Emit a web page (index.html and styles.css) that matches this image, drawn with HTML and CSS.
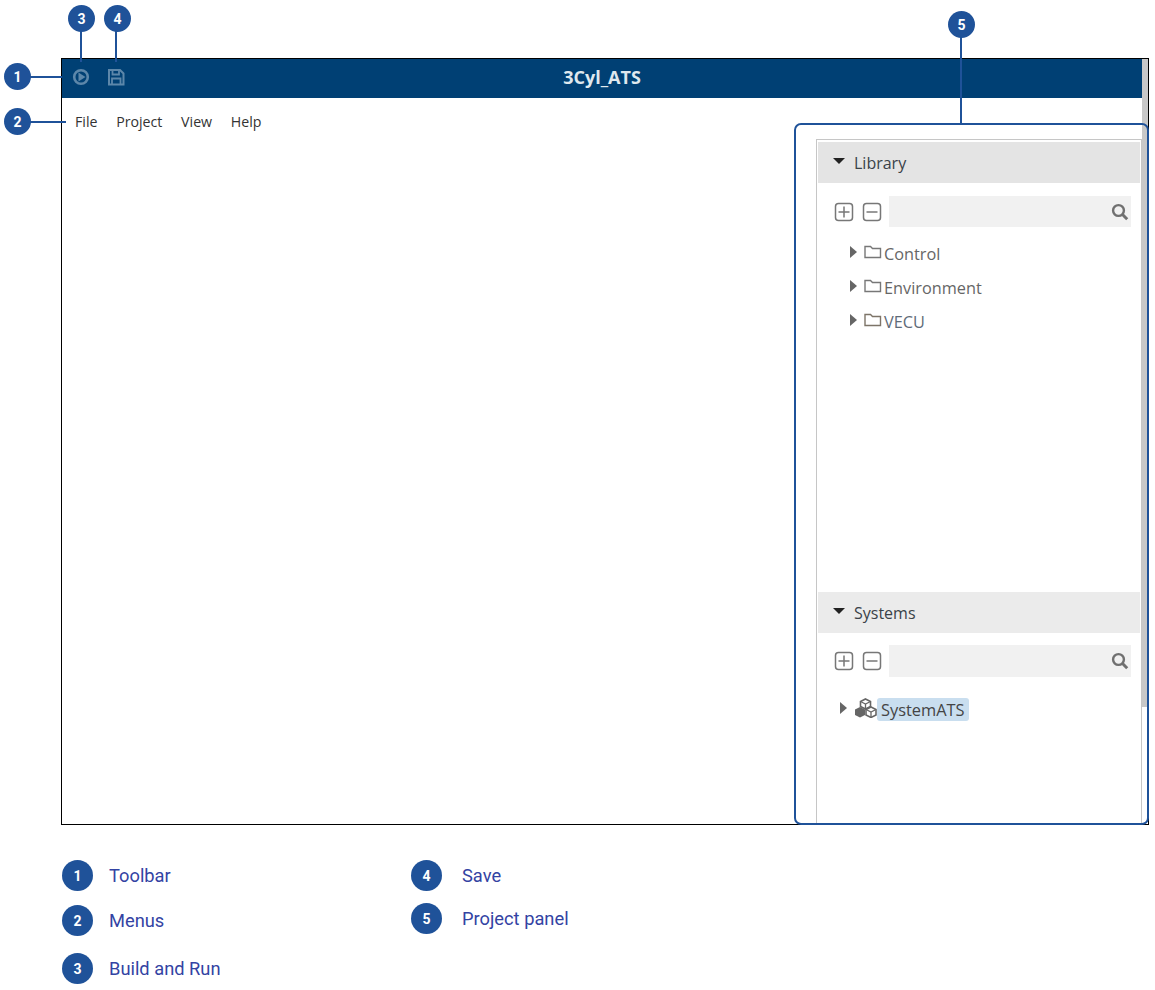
FILE: index.html
```html
<!DOCTYPE html>
<html lang="en">
<head>
    <meta charset="UTF-8">
    <meta name="viewport" content="width=device-width, initial-scale=1.0">
    <title>3Cyl_ATS overview</title>
    <link rel="stylesheet" href="styles.css">
</head>
<body>
    <div class="figure">
        <!-- Application window -->
        <div class="window">
            <div class="window-main">
                <div class="titlebar">
                    <div class="toolbar">
                        <svg class="tool-icon" width="18" height="18" viewBox="0 0 18 18">
                            <circle cx="9" cy="9" r="6.8" fill="none" stroke="#5d87aa" stroke-width="2.6"/>
                            <path d="M6.5 4.5 L13.5 9 L6.5 13.5 Z" fill="#5d87aa"/>
                        </svg>
                        <svg class="tool-icon" width="18" height="18" viewBox="0 0 18 18">
                            <path d="M2 2 H13 L16.5 5.5 V16.5 H2 Z" fill="none" stroke="#5d87aa" stroke-width="2"/>
                            <path d="M5.5 2 V6.5 H12 V2" fill="none" stroke="#5d87aa" stroke-width="1.8"/>
                            <path d="M5 16 V10.5 H13.5 V16" fill="none" stroke="#5d87aa" stroke-width="1.8"/>
                        </svg>
                    </div>
                    <div class="title">3Cyl_ATS</div>
                </div>
                <div class="workspace">
                    <div class="menu">
                        <span>File</span>
                        <span>Project</span>
                        <span>View</span>
                        <span>Help</span>
                    </div>
                    <div class="project">
                        <!-- Library -->
                        <div class="section section-library">
                            <div class="section-head section-head-dark">
                                <span class="caret-down"></span>
                                <span>Library</span>
                            </div>
                            <div class="tools">
                                <svg class="square-btn" width="20" height="20" viewBox="0 0 20 20">
                                    <rect x="1.5" y="1.5" width="17" height="17" rx="3" fill="none" stroke="#777" stroke-width="1.5"/>
                                    <path d="M10 4.5 V15.5 M4.5 10 H15.5" stroke="#777" stroke-width="1.5"/>
                                </svg>
                                <svg class="square-btn" width="20" height="20" viewBox="0 0 20 20">
                                    <rect x="1.5" y="1.5" width="17" height="17" rx="3" fill="none" stroke="#777" stroke-width="1.5"/>
                                    <path d="M4.5 10 H15.5" stroke="#777" stroke-width="1.5"/>
                                </svg>
                                <div class="search">
                                    <svg width="18" height="18" viewBox="0 0 18 18">
                                        <circle cx="7.5" cy="7.5" r="5.4" fill="none" stroke="#707070" stroke-width="2.4"/>
                                        <path d="M11.5 11.5 L16.2 16.2" stroke="#707070" stroke-width="3"/>
                                    </svg>
                                </div>
                            </div>
                            <ul class="tree">
                                <li>
                                    <span class="caret-right"></span>
                                    <svg class="folder" width="18" height="16" viewBox="0 0 18 16">
                                        <path d="M1 13.5 V2.5 H6.5 L8.5 4.5 H16.5 V13.5 Z" fill="none" stroke="#777" stroke-width="1.4"/>
                                    </svg>
                                    <span>Control</span>
                                </li>
                                <li>
                                    <span class="caret-right"></span>
                                    <svg class="folder" width="18" height="16" viewBox="0 0 18 16">
                                        <path d="M1 13.5 V2.5 H6.5 L8.5 4.5 H16.5 V13.5 Z" fill="none" stroke="#777" stroke-width="1.4"/>
                                    </svg>
                                    <span>Environment</span>
                                </li>
                                <li>
                                    <span class="caret-right"></span>
                                    <svg class="folder" width="18" height="16" viewBox="0 0 18 16">
                                        <path d="M1 13.5 V2.5 H6.5 L8.5 4.5 H16.5 V13.5 Z" fill="none" stroke="#7d7468" stroke-width="1.4"/>
                                    </svg>
                                    <span class="vecu">VECU</span>
                                </li>
                            </ul>
                        </div>
                        <!-- Systems -->
                        <div class="section">
                            <div class="section-head">
                                <span class="caret-down"></span>
                                <span>Systems</span>
                            </div>
                            <div class="tools tools-tall">
                                <svg class="square-btn" width="20" height="20" viewBox="0 0 20 20">
                                    <rect x="1.5" y="1.5" width="17" height="17" rx="3" fill="none" stroke="#777" stroke-width="1.5"/>
                                    <path d="M10 4.5 V15.5 M4.5 10 H15.5" stroke="#777" stroke-width="1.5"/>
                                </svg>
                                <svg class="square-btn" width="20" height="20" viewBox="0 0 20 20">
                                    <rect x="1.5" y="1.5" width="17" height="17" rx="3" fill="none" stroke="#777" stroke-width="1.5"/>
                                    <path d="M4.5 10 H15.5" stroke="#777" stroke-width="1.5"/>
                                </svg>
                                <div class="search">
                                    <svg width="18" height="18" viewBox="0 0 18 18">
                                        <circle cx="7.5" cy="7.5" r="5.4" fill="none" stroke="#707070" stroke-width="2.4"/>
                                        <path d="M11.5 11.5 L16.2 16.2" stroke="#707070" stroke-width="3"/>
                                    </svg>
                                </div>
                            </div>
                            <div class="system-row">
                                <span class="caret-right"></span>
                                <svg width="23" height="20" viewBox="0 0 23 20">
                                    <path d="M11.5 1 L16.5 3.5 V8.5 L11.5 11 L6.5 8.5 V3.5 Z" fill="#fff" stroke="#666" stroke-width="1.6"/>
                                    <path d="M6.5 3.5 L11.5 6 L16.5 3.5 M11.5 6 V11" fill="none" stroke="#666" stroke-width="1.3"/>
                                    <path d="M6 9 L11 11.5 V17 L6 19.5 L1 17 V11.5 Z" fill="#666"/>
                                    <path d="M17 9 L22 11.5 V17 L17 19.5 L12 17 V11.5 Z" fill="#fff" stroke="#666" stroke-width="1.6"/>
                                    <path d="M12 11.5 L17 14 L22 11.5 M17 14 V19.5" fill="none" stroke="#666" stroke-width="1.3"/>
                                </svg>
                                <span class="system-name">SystemATS</span>
                            </div>
                        </div>
                    </div>
                </div>
            </div>
            <div class="scrollbar">
                <div class="scroll-thumb"></div>
            </div>
        </div>

        <!-- Callouts drawn over the window -->
        <div class="panel-outline"></div>
        <div class="leader leader-h leader-1"></div>
        <div class="leader leader-h leader-2"></div>
        <div class="leader leader-v leader-3"></div>
        <div class="leader leader-v leader-4"></div>
        <div class="leader leader-v leader-5"></div>
        <div class="badge badge-1">1</div>
        <div class="badge badge-2">2</div>
        <div class="badge badge-3">3</div>
        <div class="badge badge-4">4</div>
        <div class="badge badge-5">5</div>

        <!-- Legend -->
        <div class="legend">
            <div class="legend-col legend-col-left">
                <div class="legend-item"><span class="num">1</span><span>Toolbar</span></div>
                <div class="legend-item"><span class="num">2</span><span>Menus</span></div>
                <div class="legend-item legend-item-last"><span class="num">3</span><span>Build and Run</span></div>
            </div>
            <div class="legend-col legend-col-right">
                <div class="legend-item"><span class="num">4</span><span>Save</span></div>
                <div class="legend-item"><span class="num">5</span><span>Project panel</span></div>
            </div>
        </div>
    </div>
</body>
</html>
```

FILE: styles.css
```css
body {
    margin: 0;
    background: #fff;
    font-family: "Open Sans", "Noto Sans", sans-serif;
}

.figure {
    position: relative;
    width: 1155px;
    height: 990px;
    overflow: hidden;
    padding-top: 58px;
    box-sizing: border-box;
}

/* Application window */
.window {
    display: flex;
    width: 1088px;
    height: 767px;
    margin-left: 61px;
    border: 1px solid #000;
    box-sizing: border-box;
}

.window-main {
    flex: 1;
    display: flex;
    flex-direction: column;
    min-width: 0;
}

.scrollbar {
    width: 6px;
    background: #fff;
}

.scroll-thumb {
    height: 648px;
    background: #c8c8c8;
}

.titlebar {
    position: relative;
    display: flex;
    align-items: center;
    justify-content: center;
    height: 39px;
    background: #004074;
}

.toolbar {
    position: absolute;
    left: 10px;
    top: 9px;
    display: flex;
    gap: 17px;
}

.tool-icon {
    display: block;
}

.title {
    padding-bottom: 3px;
    color: #dfe8ee;
    font-family: "Open Sans", sans-serif;
    font-size: 18px;
    font-weight: 700;
}

.workspace {
    flex: 1;
    display: flex;
    justify-content: space-between;
    min-height: 0;
}

.menu {
    display: flex;
    gap: 18.7px;
    padding: 14px 0 0 13px;
    color: #333;
    font-size: 14.2px;
    line-height: 20px;
}

.project {
    width: 326px;
    margin-top: 41px;
    padding: 2px 1px 0;
    border: 1px solid #c6c6c6;
    border-bottom: none;
    box-sizing: border-box;
}

.section-library {
    height: 450px;
}

.section-head {
    display: flex;
    align-items: center;
    gap: 9px;
    height: 41px;
    padding-left: 15px;
    background: #ebebeb;
    color: #3a4248;
    font-size: 16px;
}

.section-head-dark {
    background: #e4e4e4;
}

.caret-down {
    width: 0;
    height: 0;
    margin-top: -3px;
    border-left: 6px solid transparent;
    border-right: 6px solid transparent;
    border-top: 6px solid #222;
}

.caret-right {
    width: 0;
    height: 0;
    margin-top: -4px;
    border-top: 6px solid transparent;
    border-bottom: 6px solid transparent;
    border-left: 7px solid #666;
}

.tools {
    display: flex;
    align-items: center;
    height: 31px;
    margin-top: 13px;
    padding-left: 16px;
    padding-right: 9px;
}

.tools-tall {
    height: 32px;
    margin-top: 12px;
}

.square-btn {
    flex: none;
    margin-right: 8px;
}

.square-btn + .square-btn {
    margin-right: 7px;
}

.search {
    flex: 1;
    align-self: stretch;
    display: flex;
    align-items: center;
    justify-content: flex-end;
    padding-right: 2px;
    background: #f1f1f1;
}

.tree {
    list-style: none;
    margin: 10px 0 0;
    padding: 0 0 0 32px;
    color: #666;
    font-size: 16.3px;
}

.tree li {
    display: flex;
    align-items: center;
    height: 34px;
}

.folder {
    margin: -4px 2px 0 7px;
}

.vecu {
    color: #5f6b78;
}

.system-row {
    display: flex;
    align-items: center;
    height: 24px;
    margin-top: 20px;
    padding-left: 22px;
}

.system-row .caret-right {
    margin-top: -2px;
}

.system-row svg {
    margin: -3px 0 0 7px;
}

.system-name {
    padding: 0 4px;
    border-radius: 3px;
    background: #c9deef;
    color: #444;
    font-size: 16.4px;
    line-height: 23px;
}

/* Callouts */
.panel-outline {
    position: absolute;
    left: 794px;
    top: 123px;
    width: 355px;
    height: 702px;
    border: 2px solid #1f5299;
    border-radius: 7px;
    box-sizing: border-box;
}

.leader {
    position: absolute;
    background: #1f5299;
}

.leader-h {
    height: 2px;
}

.leader-v {
    width: 2px;
}

.leader-1 {
    left: 30px;
    top: 76px;
    width: 32px;
}

.leader-2 {
    left: 30px;
    top: 121px;
    width: 36px;
}

.leader-3 {
    left: 80px;
    top: 30px;
    height: 32px;
}

.leader-4 {
    left: 115px;
    top: 30px;
    height: 32px;
}

.leader-5 {
    left: 960px;
    top: 36px;
    height: 88px;
}

.badge,
.num {
    display: flex;
    align-items: center;
    justify-content: center;
    flex: none;
    border-radius: 50%;
    background: #1f5299;
    color: #fff;
    font-family: "Roboto", sans-serif;
    font-weight: 700;
}

.badge {
    position: absolute;
    width: 27px;
    height: 27px;
    font-size: 14px;
}

.badge-1 {
    left: 4px;
    top: 63px;
}

.badge-2 {
    left: 4px;
    top: 108px;
}

.badge-3 {
    left: 68px;
    top: 5px;
}

.badge-4 {
    left: 104px;
    top: 5px;
}

.badge-5 {
    left: 948px;
    top: 11px;
}

/* Legend */
.legend {
    display: flex;
    margin: 35px 0 0 62px;
}

.legend-col-left {
    width: 349px;
}

.legend-item {
    display: flex;
    align-items: center;
    gap: 16px;
    height: 31px;
    margin-bottom: 14px;
    color: #3343a3;
    font-family: "Roboto", sans-serif;
    font-size: 18.3px;
}

.legend-col-left .legend-item:nth-child(2) {
    margin-bottom: 17px;
}

.legend-col-right .legend-item {
    gap: 20px;
    margin-bottom: 12px;
}

.num {
    width: 31px;
    height: 31px;
    font-size: 14px;
}
```
